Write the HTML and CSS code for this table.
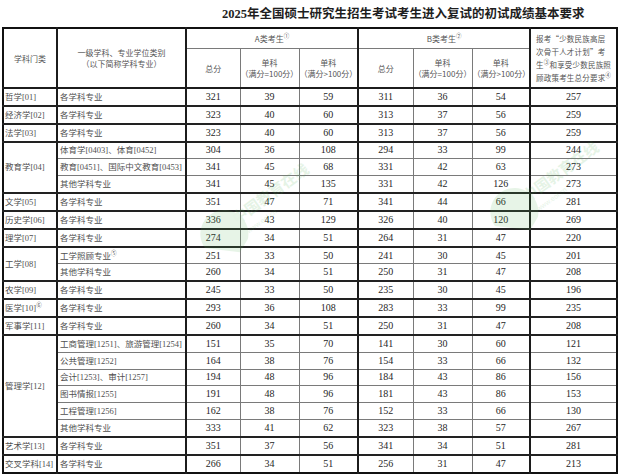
FILE: index.html
```html
<!DOCTYPE html>
<html lang="zh-CN">
<head>
<meta charset="utf-8">
<title>2025年全国硕士研究生招生考试考生进入复试的初试成绩基本要求</title>
<link rel="stylesheet" href="styles.css">
</head>
<body>
<div class="page">
  <h1 class="title">2025年全国硕士研究生招生考试考生进入复试的初试成绩基本要求</h1>
  <table class="grid">
    <colgroup>
      <col class="c1"><col class="c2 tk"><col class="c3 tk"><col class="c4"><col class="c5"><col class="c6 tk"><col class="c7"><col class="c8"><col class="c9 tk">
    </colgroup>
    <thead>
      <tr class="h1">
        <th rowspan="2">学科门类</th>
        <th rowspan="2">一级学科、专业学位类别<br>（以下简称学科专业）</th>
        <th colspan="3">A类考生<sup>①</sup></th>
        <th colspan="3">B类考生<sup>②</sup></th>
        <th rowspan="2" class="note"><span>报考“少数民族高层</span><span>次骨干人才计划”考</span><span>生<sup>③</sup>和享受少数民族照</span><span>顾政策考生总分要求<sup>④</sup></span></th>
      </tr>
      <tr class="h2">
        <th>总分</th>
        <th>单科<br>（满分=100分）</th>
        <th>单科<br>（满分&gt;100分）</th>
        <th>总分</th>
        <th>单科<br>（满分=100分）</th>
        <th>单科<br>（满分&gt;100分）</th>
      </tr>
    </thead>
    <tbody>
      <tr class="g"><td class="k">哲学[01]</td><td class="m">各学科专业</td><td>321</td><td>39</td><td>59</td><td>311</td><td>36</td><td>54</td><td>257</td></tr>
      <tr class="g"><td class="k">经济学[02]</td><td class="m">各学科专业</td><td>323</td><td>40</td><td>60</td><td>313</td><td>37</td><td>56</td><td>259</td></tr>
      <tr class="g"><td class="k">法学[03]</td><td class="m">各学科专业</td><td>323</td><td>40</td><td>60</td><td>313</td><td>37</td><td>56</td><td>259</td></tr>
      <tr class="g"><td class="k" rowspan="3">教育学[04]</td><td class="m">体育学[0403]、体育[0452]</td><td>304</td><td>36</td><td>108</td><td>294</td><td>33</td><td>99</td><td>244</td></tr>
      <tr><td class="m">教育[0451]、国际中文教育[0453]</td><td>341</td><td>45</td><td>68</td><td>331</td><td>42</td><td>63</td><td>273</td></tr>
      <tr><td class="m">其他学科专业</td><td>341</td><td>45</td><td>135</td><td>331</td><td>42</td><td>126</td><td>273</td></tr>
      <tr class="g"><td class="k">文学[05]</td><td class="m">各学科专业</td><td>351</td><td>47</td><td>71</td><td>341</td><td>44</td><td>66</td><td>281</td></tr>
      <tr class="g"><td class="k">历史学[06]</td><td class="m">各学科专业</td><td>336</td><td>43</td><td>129</td><td>326</td><td>40</td><td>120</td><td>269</td></tr>
      <tr class="g"><td class="k">理学[07]</td><td class="m">各学科专业</td><td>274</td><td>34</td><td>51</td><td>264</td><td>31</td><td>47</td><td>220</td></tr>
      <tr class="g"><td class="k" rowspan="2">工学[08]</td><td class="m">工学照顾专业<sup>⑤</sup></td><td>251</td><td>33</td><td>50</td><td>241</td><td>30</td><td>45</td><td>201</td></tr>
      <tr><td class="m">其他学科专业</td><td>260</td><td>34</td><td>51</td><td>250</td><td>31</td><td>47</td><td>208</td></tr>
      <tr class="g"><td class="k">农学[09]</td><td class="m">各学科专业</td><td>245</td><td>33</td><td>50</td><td>235</td><td>30</td><td>45</td><td>196</td></tr>
      <tr class="g"><td class="k">医学[10]<sup>⑥</sup></td><td class="m">各学科专业</td><td>293</td><td>36</td><td>108</td><td>283</td><td>33</td><td>99</td><td>235</td></tr>
      <tr class="g"><td class="k">军事学[11]</td><td class="m">各学科专业</td><td>260</td><td>34</td><td>51</td><td>250</td><td>31</td><td>47</td><td>208</td></tr>
      <tr class="g"><td class="k" rowspan="6">管理学[12]</td><td class="m">工商管理[1251]、旅游管理[1254]</td><td>151</td><td>35</td><td>70</td><td>141</td><td>30</td><td>60</td><td>121</td></tr>
      <tr><td class="m">公共管理[1252]</td><td>164</td><td>38</td><td>76</td><td>154</td><td>33</td><td>66</td><td>132</td></tr>
      <tr><td class="m">会计[1253]、审计[1257]</td><td>194</td><td>48</td><td>96</td><td>184</td><td>43</td><td>86</td><td>156</td></tr>
      <tr><td class="m">图书情报[1255]</td><td>191</td><td>48</td><td>96</td><td>181</td><td>43</td><td>86</td><td>153</td></tr>
      <tr><td class="m">工程管理[1256]</td><td>162</td><td>38</td><td>76</td><td>152</td><td>33</td><td>66</td><td>130</td></tr>
      <tr><td class="m">其他学科专业</td><td>333</td><td>41</td><td>62</td><td>323</td><td>38</td><td>57</td><td>267</td></tr>
      <tr class="g"><td class="k">艺术学[13]</td><td class="m">各学科专业</td><td>351</td><td>37</td><td>56</td><td>341</td><td>34</td><td>51</td><td>281</td></tr>
      <tr class="g"><td class="k">交叉学科[14]</td><td class="m">各学科专业</td><td>266</td><td>34</td><td>51</td><td>256</td><td>31</td><td>47</td><td>213</td></tr>
    </tbody>
  </table>
  <svg class="wm wm1" width="150" height="110" viewBox="0 0 150 110" aria-hidden="true">
    <g transform="rotate(-36 75 55)">
      <path d="M8 62 a24 24 0 1 1 40 18 l-14 6 z" fill="#5cb85c"/>
      <text x="48" y="62" font-size="15" font-weight="700" fill="#4caf50" font-family="Noto Sans CJK SC, sans-serif">中国教育在线</text>
      <text x="52" y="76" font-size="7" fill="#4caf50" font-family="Liberation Sans, sans-serif">www.eol.cn</text>
    </g>
  </svg>
  <svg class="wm wm2" width="150" height="110" viewBox="0 0 150 110" aria-hidden="true">
    <g transform="rotate(-36 75 55)">
      <path d="M8 62 a24 24 0 1 1 40 18 l-14 6 z" fill="#5cb85c"/>
      <text x="48" y="62" font-size="15" font-weight="700" fill="#4caf50" font-family="Noto Sans CJK SC, sans-serif">中国教育在线</text>
      <text x="52" y="76" font-size="7" fill="#4caf50" font-family="Liberation Sans, sans-serif">www.eol.cn</text>
    </g>
  </svg>
</div>
</body>
</html>
```
FILE: styles.css
```css
html, body {
  margin: 0;
  padding: 0;
  background: #ffffff;
}
body {
  font-family: "Liberation Serif", "Noto Sans CJK SC", serif;
  color: #333;
}
.page {
  position: relative;
  width: 618px;
  height: 475px;
  overflow: hidden;
}
.title {
  margin: 0;
  height: 27px;
  box-sizing: border-box;
  padding: 7px 0 0 222px;
  font-family: "Liberation Serif", "Noto Sans CJK SC", serif;
  font-size: 12.5px;
  line-height: 15px;
  font-weight: 700;
  color: #1e1e1e;
  white-space: nowrap;
}
.grid {
  margin-left: 2px;
  border-collapse: collapse;
  table-layout: fixed;
  width: 614px;
  border: 2px solid #111;
}
.c1 { width: 54px; }
.c2 { width: 129px; }
.c3 { width: 54px; }
.c4 { width: 59px; }
.c5 { width: 59px; }
.c6 { width: 55px; }
.c7 { width: 59px; }
.c8 { width: 58px; }
.c9 { width: 87px; }
col.tk { border-left: 2px solid #1c1c1c; }

th, td {
  border: 1px solid #7a7a7a;
  padding: 0;
  text-align: center;
  vertical-align: middle;
  white-space: nowrap;
  overflow: hidden;
}
th {
  font-family: "Noto Sans CJK SC", sans-serif;
  font-weight: 400;
  font-size: 8px;
  line-height: 11px;
  color: #555;
}
thead .h1 th { height: 19px; }
thead .h2 th { height: 38px; border-top: 1.5px solid #333; }
thead tr:last-child th, thead th[rowspan] { border-bottom: 2px solid #1c1c1c; }
th sup, td sup {
  font-size: 5.5px;
  line-height: 0;
  vertical-align: 4px;
}
th.note {
  text-align: left;
  padding: 0 3px 0 5px;
  line-height: 13px;
  font-size: 7.5px;
}
th.note span {
  display: block;
  letter-spacing: 0.2px;
}
td {
  height: 15.85px;
  font-size: 10px;
  line-height: 12px;
  color: #262626;
  border-top: 1px solid #3a3a3a;
}
tr.g td { border-top: 2px solid #222; }
td.k, td.m {
  text-align: left;
  font-size: 8.5px;
  color: #505050;
}
td.k { padding-left: 1px; }
td.m { padding-left: 2px; }

.wm {
  position: absolute;
  opacity: 0.14;
  pointer-events: none;
}
.wm1 { left: 180px; top: 148px; }
.wm2 { left: 470px; top: 126px; }
```
